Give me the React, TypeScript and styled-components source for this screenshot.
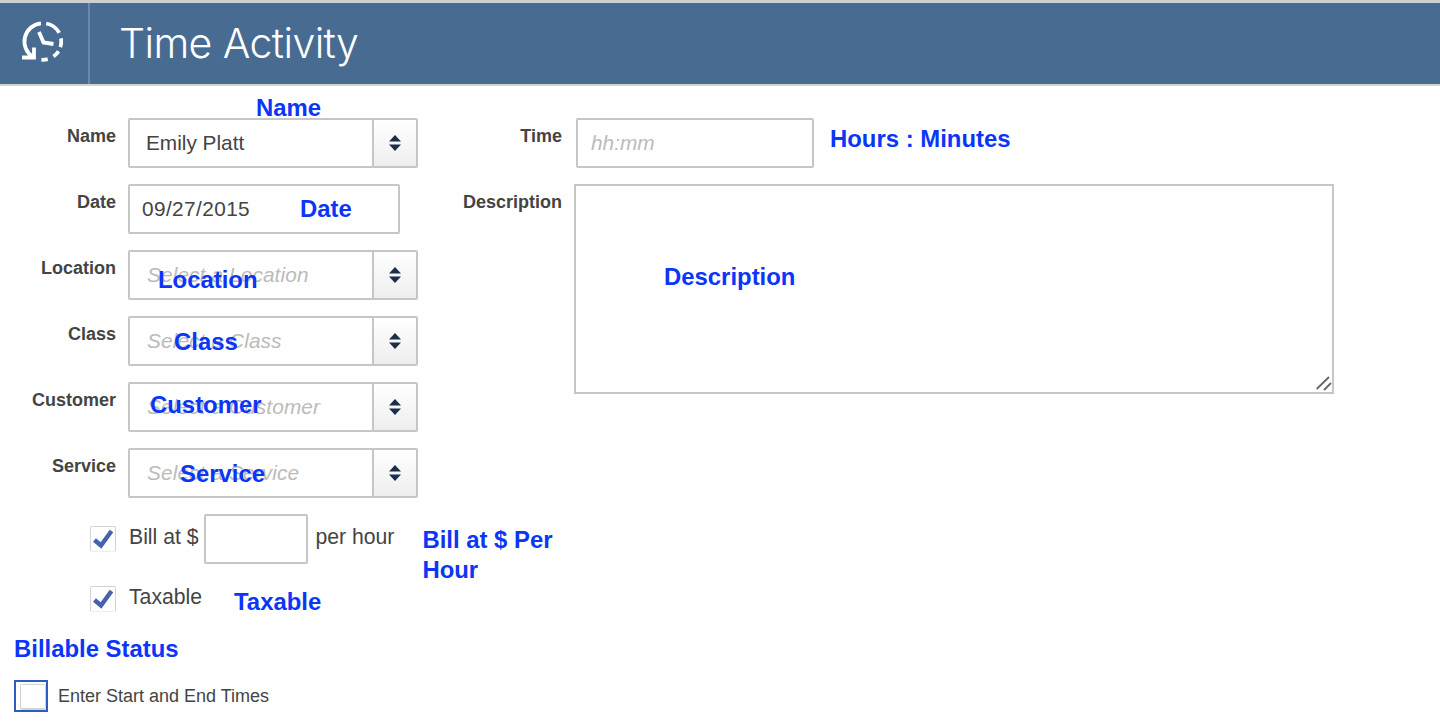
import React from 'react';
import styled, { createGlobalStyle } from 'styled-components';

const GlobalStyle = createGlobalStyle`
  html, body {
    margin: 0;
    padding: 0;
    background: #fff;
    font-family: "Liberation Sans", Arial, sans-serif;
    color: #444;
  }
`;

const Header = styled.header`
  height: 81px;
  display: flex;
  align-items: stretch;
  background: #486b92;
  border-top: 3px solid #cfcfcf;
  border-bottom: 2px solid #d4d4d4;
`;

const IconCell = styled.div`
  width: 88px;
  display: flex;
  align-items: center;
  justify-content: center;
  border-right: 2px solid #6b8aab;
`;

const Title = styled.h1`
  margin: -2px 0 0 29px;
  align-self: center;
  font-family: Inter, "Liberation Sans", sans-serif;
  font-weight: 300;
  font-size: 41px;
  letter-spacing: -0.6px;
  color: #fff;
`;

const Form = styled.div`
  display: flex;
  padding-top: 32px;
`;

const LeftColumn = styled.div`
  width: 438px;
  display: flex;
  flex-direction: column;
  gap: 16px;
`;

const RightColumn = styled.div`
  display: flex;
  flex-direction: column;
  gap: 16px;
`;

const Row = styled.div`
  display: flex;
  align-items: flex-start;
`;

const Label = styled.label<{ $width: number }>`
  width: ${(p) => p.$width}px;
  margin-right: 12px;
  padding-top: 8px;
  text-align: right;
  font-size: 18px;
  line-height: 20px;
  font-weight: 700;
  color: #444;
`;

const Field = styled.div<{ $width: number }>`
  position: relative;
  box-sizing: border-box;
  width: ${(p) => p.$width}px;
  height: 50px;
  display: flex;
  align-items: center;
  border: 2px solid #c6c6c6;
  border-radius: 2px;
  background: #fff;
  font-size: 20.8px;
`;

const SelectValue = styled.span<{ $placeholder?: boolean }>`
  flex: 1;
  padding-left: ${(p) => (p.$placeholder ? 17 : 16)}px;
  letter-spacing: ${(p) => (p.$placeholder ? 0.12 : 0)}px;
  color: ${(p) => (p.$placeholder ? '#bbb' : '#444')};
  font-style: ${(p) => (p.$placeholder ? 'italic' : 'normal')};
`;

const DateValue = styled.span`
  padding-left: 12px;
  letter-spacing: 0.4px;
  color: #444;
`;

const Addon = styled.div`
  width: 44px;
  height: 100%;
  display: flex;
  align-items: center;
  justify-content: center;
  box-sizing: border-box;
  border-left: 2px solid #c6c6c6;
  background: linear-gradient(#fff, #eee);
`;

const TimeInput = styled(Field)`
  margin-left: 2px;
`;

const TimePlaceholder = styled.span`
  padding-left: 13px;
  color: #bbb;
  font-style: italic;
`;

const TextArea = styled.div`
  position: relative;
  box-sizing: border-box;
  width: 760px;
  height: 210px;
  border: 2px solid #c6c6c6;
`;

const Grip = styled.svg`
  position: absolute;
  right: 0;
  bottom: 0;
`;

const Note = styled.span<{ $left: number; $top: number }>`
  position: absolute;
  left: ${(p) => p.$left}px;
  top: ${(p) => p.$top}px;
  white-space: nowrap;
  font-size: 23.9px;
  line-height: 30px;
  font-weight: 700;
  color: #0b35f7;
`;

const InlineNote = styled.span`
  font-size: 23.9px;
  line-height: 30px;
  font-weight: 700;
  color: #0b35f7;
`;

const HoursNote = styled(InlineNote)`
  margin-left: 16px;
  padding-top: 6px;
`;

const CheckRow = styled.div<{ $top: number }>`
  display: flex;
  align-items: flex-start;
  margin-top: ${(p) => p.$top}px;
  padding-left: 90px;
  font-size: 21.2px;
`;

const CheckBox = styled.div`
  box-sizing: border-box;
  flex: none;
  width: 26px;
  height: 26px;
  display: flex;
  align-items: center;
  justify-content: center;
  border: 1px solid #d4d4d4;
  border-bottom-color: #eee;
  border-radius: 2px;
`;

const BillBox = styled(CheckBox)`
  margin-top: 12px;
`;

const CheckText = styled.span`
  line-height: 24px;
`;

const BillText = styled(CheckText)`
  margin-left: 13px;
  padding-top: 11px;
`;

const PerHour = styled(CheckText)`
  padding-top: 11px;
`;

const RateInput = styled.div`
  box-sizing: border-box;
  width: 104px;
  height: 50px;
  margin: 0 7px 0 6px;
  border: 2px solid #c6c6c6;
  border-radius: 2px;
`;

const BillNote = styled(InlineNote)`
  width: 150px;
  margin-left: 28px;
  padding-top: 11px;
`;

const TaxText = styled(CheckText)`
  margin-left: 13px;
  margin-top: -1px;
`;

const TaxNote = styled(InlineNote)`
  margin-left: 32px;
  padding-top: 1px;
`;

const StatusHeading = styled.h2`
  margin: 17px 0 0 14px;
  font-size: 23.9px;
  line-height: 30px;
  font-weight: 700;
  color: #0b35f7;
`;

const StatusRow = styled.div`
  display: flex;
  align-items: center;
  margin: 16px 0 0 14px;
  font-size: 18px;
`;

const FocusBox = styled.div`
  box-sizing: border-box;
  width: 34px;
  height: 32px;
  padding: 2px 2px 0 4px;
  border: 2px solid #2f5cc0;
`;

const FocusInner = styled.div`
  box-sizing: border-box;
  height: 100%;
  width: 26px;
  border: 1px solid #d4d4d4;
  border-bottom-width: 2px;
  border-radius: 2px;
`;

const StatusText = styled.span`
  margin-left: 10px;
`;

const ClockIcon = () => (
  <svg width="50" height="50" viewBox="0 0 50 50" fill="none" stroke="#fff" strokeWidth="3.8">
    <path d="M14 38 A18.3 18.3 0 0 1 22 4.3" />
    <path d="M27.2 4.5 A18.3 18.3 0 0 1 40.2 13.9" />
    <path d="M42 19.3 A18.3 18.3 0 0 1 41.4 28.2" />
    <path d="M39.5 32.2 A18.3 18.3 0 0 1 34.5 37.5" />
    <path d="M28.7 40.2 A18.3 18.3 0 0 1 22.4 40.7" />
    <path d="M3 38.5 H15 V28.5" />
    <path d="M20 13 L24.5 23.5 L34.5 25" />
  </svg>
);

const UpDown = () => (
  <svg width="12" height="16" viewBox="0 0 12 16" fill="#1b2f4b">
    <path d="M6 0 L12 6.5 H0 Z" />
    <path d="M0 9.5 H12 L6 16 Z" />
  </svg>
);

const Check = () => (
  <svg width="22" height="20" viewBox="0 0 22 20" fill="none" stroke="#4463ab" strokeWidth="4.4">
    <path d="M2.5 11 L9 16.5 L19.5 2" />
  </svg>
);

interface SelectFieldProps {
  label: string;
  value: string;
  placeholder?: boolean;
  note: string;
  noteLeft: number;
  noteTop: number;
}

const SelectField = ({ label, value, placeholder, note, noteLeft, noteTop }: SelectFieldProps) => (
  <Row>
    <Label $width={116}>{label}</Label>
    <Field $width={290}>
      <SelectValue $placeholder={placeholder}>{value}</SelectValue>
      <Addon>
        <UpDown />
      </Addon>
      <Note $left={noteLeft} $top={noteTop}>{note}</Note>
    </Field>
  </Row>
);

export default function App() {
  return (
    <>
      <GlobalStyle />
      <Header>
        <IconCell>
          <ClockIcon />
        </IconCell>
        <Title>Time Activity</Title>
      </Header>
      <Form>
        <LeftColumn>
          <SelectField label="Name" value="Emily Platt" note="Name" noteLeft={126} noteTop={-27} />
          <Row>
            <Label $width={116}>Date</Label>
            <Field $width={272}>
              <DateValue>09/27/2015</DateValue>
              <Note $left={170} $top={8}>Date</Note>
            </Field>
          </Row>
          <SelectField label="Location" value="Select a Location" placeholder note="Location" noteLeft={28} noteTop={13} />
          <SelectField label="Class" value="Select a Class" placeholder note="Class" noteLeft={44} noteTop={9} />
          <SelectField label="Customer" value="Select a Customer" placeholder note="Customer" noteLeft={20} noteTop={6} />
          <SelectField label="Service" value="Select a Service" placeholder note="Service" noteLeft={50} noteTop={9} />
        </LeftColumn>
        <RightColumn>
          <Row>
            <Label $width={124}>Time</Label>
            <TimeInput $width={238}>
              <TimePlaceholder>hh:mm</TimePlaceholder>
            </TimeInput>
            <HoursNote>Hours : Minutes</HoursNote>
          </Row>
          <Row>
            <Label $width={124}>Description</Label>
            <TextArea>
              <Note $left={88} $top={76}>Description</Note>
              <Grip width="16" height="16" viewBox="0 0 16 16" stroke="#666" strokeWidth="1.8">
                <path d="M0.7 13 L13 1" />
                <path d="M8 14 L15 7" />
              </Grip>
            </TextArea>
          </Row>
        </RightColumn>
      </Form>
      <CheckRow $top={16}>
        <BillBox>
          <Check />
        </BillBox>
        <BillText>Bill at $</BillText>
        <RateInput />
        <PerHour>per hour</PerHour>
        <BillNote>Bill at $ Per Hour</BillNote>
      </CheckRow>
      <CheckRow $top={1}>
        <CheckBox>
          <Check />
        </CheckBox>
        <TaxText>Taxable</TaxText>
        <TaxNote>Taxable</TaxNote>
      </CheckRow>
      <StatusHeading>Billable Status</StatusHeading>
      <StatusRow>
        <FocusBox>
          <FocusInner />
        </FocusBox>
        <StatusText>Enter Start and End Times</StatusText>
      </StatusRow>
    </>
  );
}
